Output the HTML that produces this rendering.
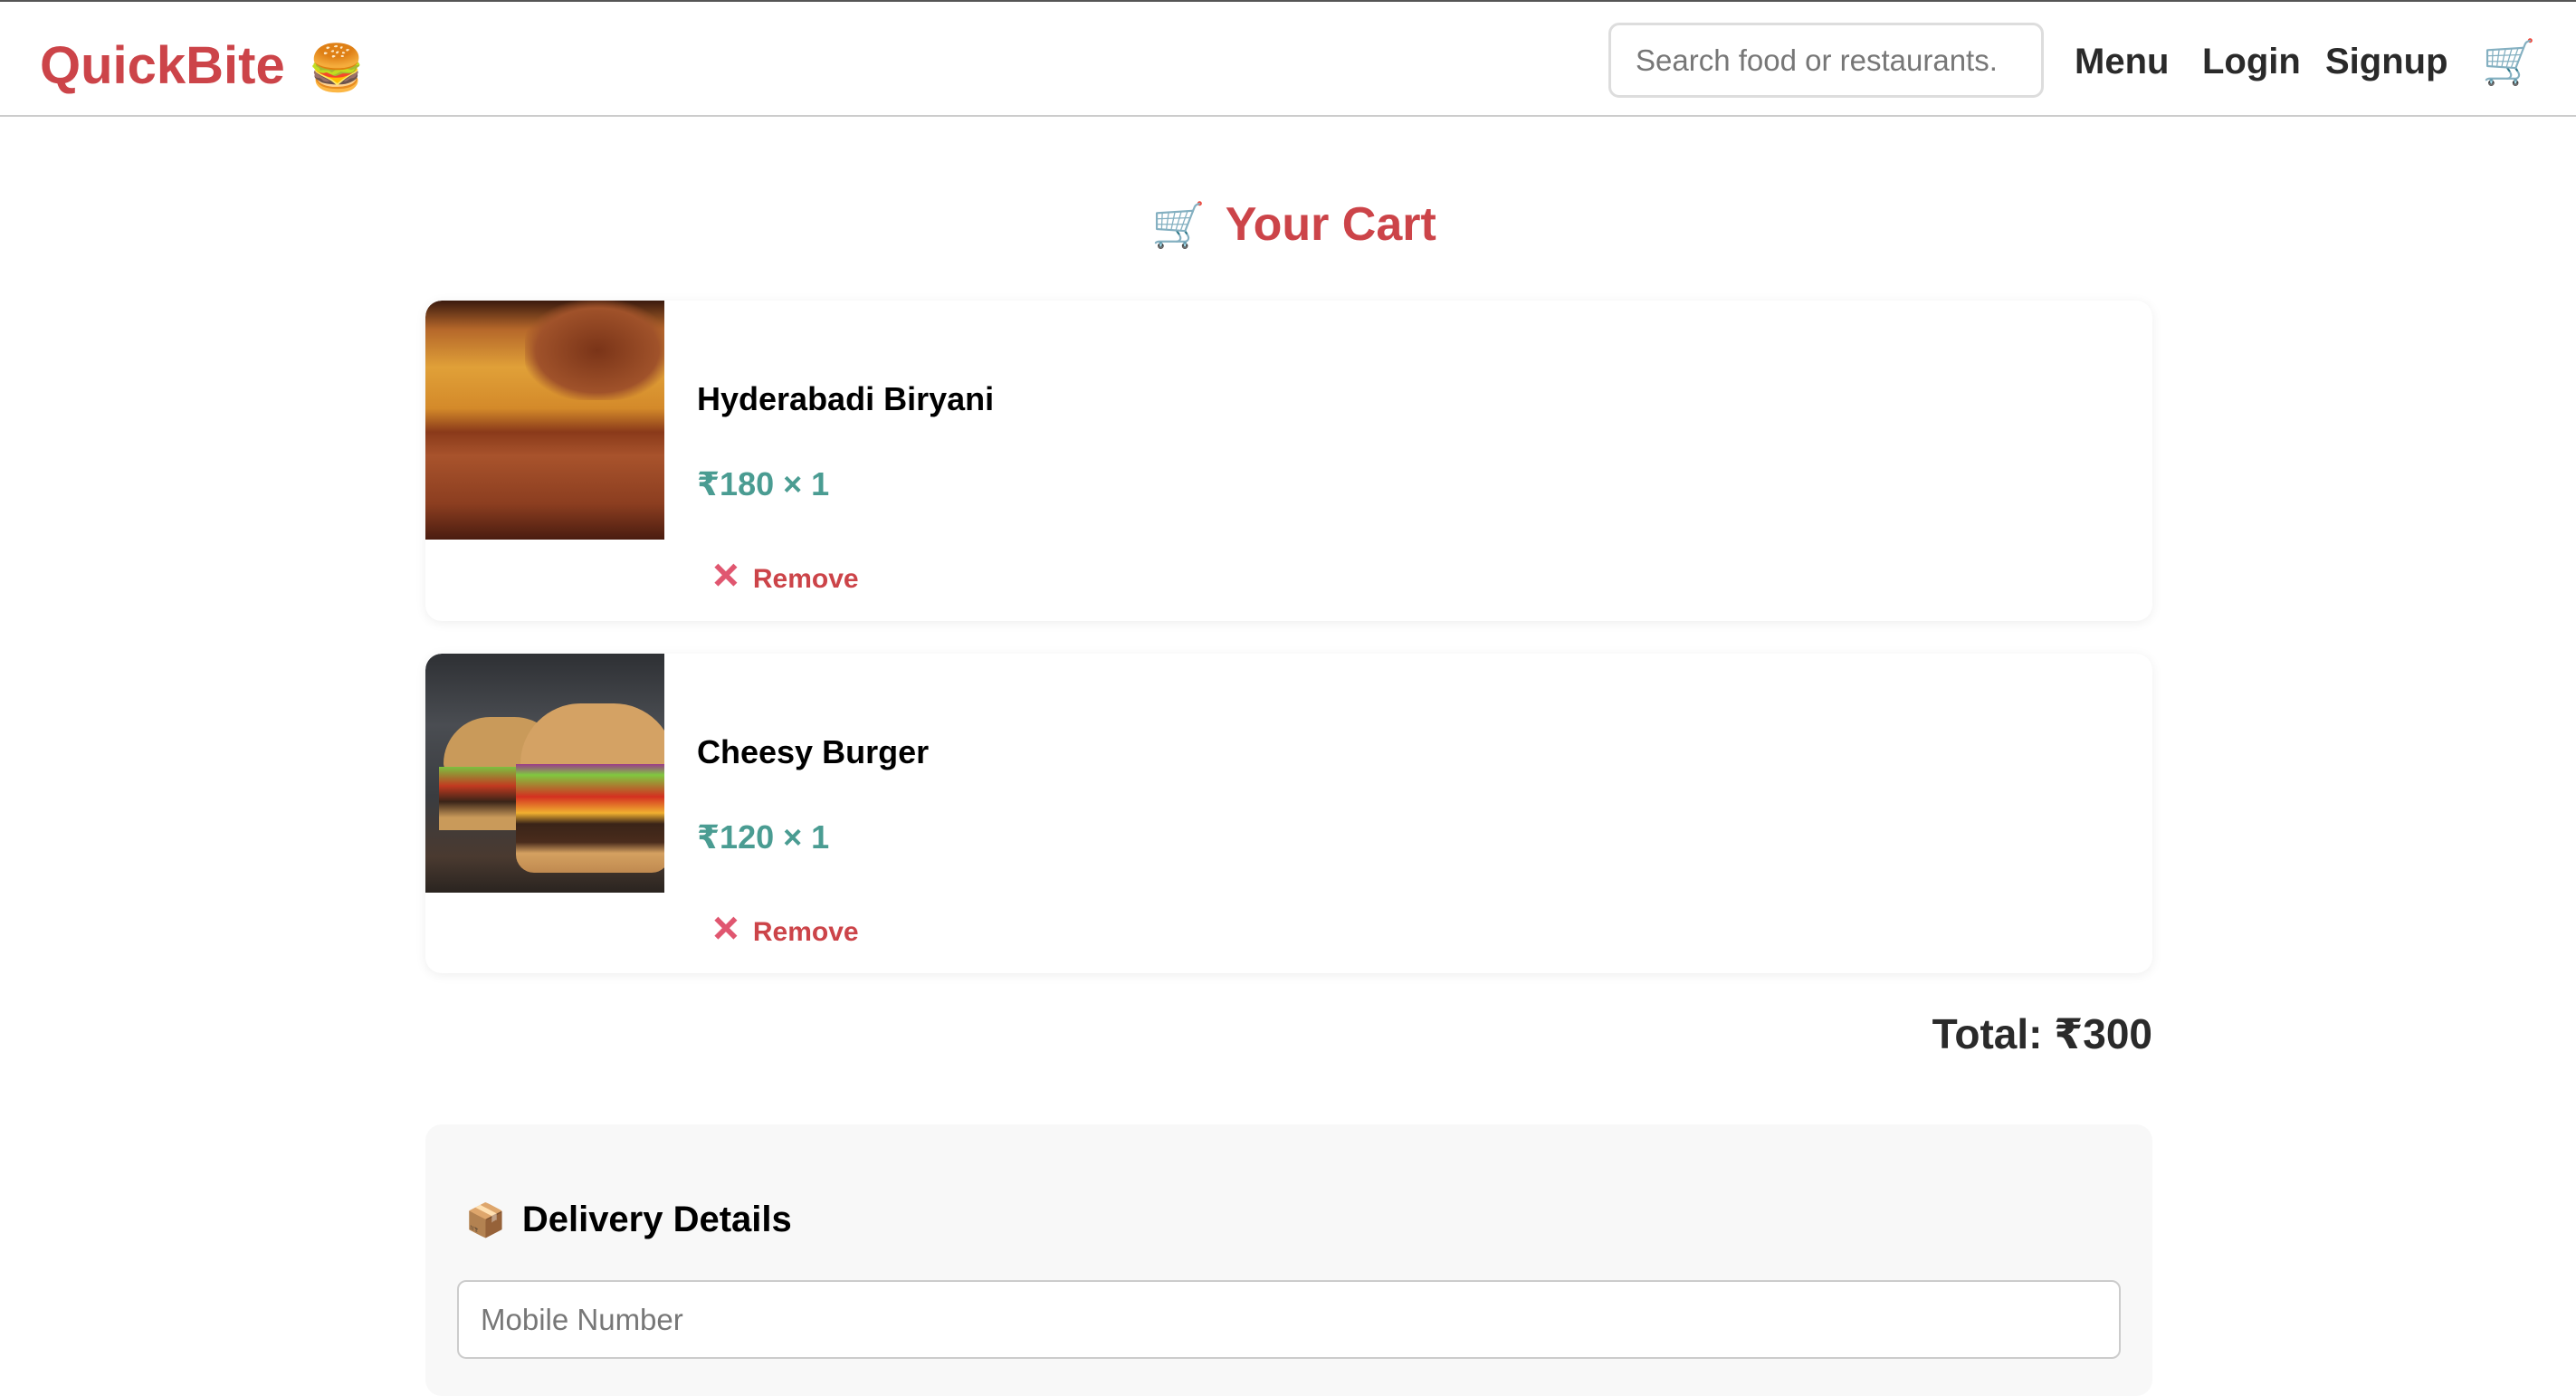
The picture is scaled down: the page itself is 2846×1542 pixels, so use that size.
<!DOCTYPE html>
<html><head><meta charset="utf-8">
<style>
*{box-sizing:border-box;margin:0;padding:0}
html,body{width:2846px;height:1514px;overflow:hidden;background:#fff;font-family:"Liberation Sans","DejaVu Sans",sans-serif}
.topbar{position:absolute;left:0;top:0;width:2846px;height:2px;background:#555}
.hdr{position:absolute;left:0;top:2px;width:2846px;height:127px;border-bottom:2px solid #ccc;background:#fff}
.logo{position:absolute;left:44px;top:36px;font-size:58px;font-weight:bold;color:#cc4449;letter-spacing:0;line-height:70px}
.logo span{font-size:50px;margin-left:26px}
.search{position:absolute;left:1777px;top:23px;width:481px;height:83px;border:3px solid #ddd;border-radius:12px;font-size:33px;color:#777;padding-left:27px;line-height:77px;white-space:nowrap;overflow:hidden}
.nav{position:absolute;top:38px;font-size:40px;font-weight:bold;color:#2a2a2a;line-height:56px}
.cart{position:absolute;left:2742px;top:40px;font-size:48px;line-height:56px;color:#999}
.title{position:absolute;left:1272px;top:215px;font-size:52px;font-weight:bold;color:#cc4449;line-height:66px;white-space:nowrap}
.title span{font-size:48px;margin-right:22px}
.card{position:absolute;left:470px;width:1908px;border-radius:18px;background:#fff;box-shadow:0 2px 12px rgba(0,0,0,0.07);overflow:hidden}
.img{position:absolute;left:0;top:0;width:264px;height:264px;border-radius:18px 0 0 0;overflow:hidden}
.name{position:absolute;left:300px;font-size:36px;font-weight:bold;color:#000}
.price{position:absolute;left:300px;font-size:36px;font-weight:bold;color:#4a9c92}
.rm{position:absolute;left:316px;font-size:30px;font-weight:bold;color:#cc4449}
.rm b{color:#e05770;font-size:38px;margin-right:14px;-webkit-text-stroke:2px #e05770}
.total{position:absolute;right:468px;top:1115px;font-size:46px;font-weight:bold;color:#2a2a2a}
.del{position:absolute;left:470px;top:1242px;width:1908px;height:300px;background:#f8f8f8;border-radius:18px}
.dh{position:absolute;left:44px;top:80px;font-size:40px;font-weight:bold;color:#000;line-height:50px}
.dh span{font-size:36px;margin-right:18px}
.inp{position:absolute;left:35px;top:172px;width:1838px;height:87px;border:2px solid #ccc;border-radius:10px;background:#fff;font-size:33px;color:#777;padding-left:24px;line-height:83px}
</style></head><body>
<div class="topbar"></div>
<div class="hdr">
<div class="logo">QuickBite<span>🍔</span></div>
<div class="search">Search food or restaurants.</div>
<div class="nav" style="left:2292px">Menu</div>
<div class="nav" style="left:2433px">Login</div>
<div class="nav" style="left:2569px">Signup</div>
<div class="cart">🛒</div>
</div>
<div class="title"><span>🛒</span>Your Cart</div>

<div class="card" style="top:332px;height:354px">
 <div class="img" style="background:linear-gradient(180deg,#3a1a0e 0%,#b5672a 12%,#e0a038 28%,#d48a2a 45%,#8a3a1a 55%,#a8532c 65%,#8c3e20 85%,#4a1c10 100%)">
  <div style="position:absolute;left:110px;top:0;width:160px;height:110px;border-radius:40%;background:radial-gradient(#7a3418,#a0522a 60%,transparent 75%)"></div>
 </div>
 <div class="name" style="top:88px">Hyderabadi Biryani</div>
 <div class="price" style="top:182px">₹180 × 1</div>
 <div class="rm" style="top:282px"><b>✕</b>Remove</div>
</div>

<div class="card" style="top:722px;height:353px">
 <div class="img" style="background:linear-gradient(180deg,#2e3034 0%,#4a4d52 30%,#3a3c40 60%,#4a3a30 85%,#2a2420 100%)">
  <div style="position:absolute;left:20px;top:70px;width:130px;height:60px;border-radius:60px 60px 10px 10px;background:#c99a5a"></div>
  <div style="position:absolute;left:15px;top:125px;width:140px;height:70px;background:linear-gradient(180deg,#7cc040,#c23a20 30%,#3a2418 55%,#c99a5a 80%)"></div>
  <div style="position:absolute;left:105px;top:55px;width:170px;height:75px;border-radius:80px 80px 10px 10px;background:#d4a264"></div>
  <div style="position:absolute;left:100px;top:122px;width:170px;height:120px;background:linear-gradient(180deg,#9a3a8a 0%,#80c840 10%,#d43020 30%,#f0b030 45%,#3a2418 55%,#4a2c1c 72%,#d4a060 82%,#c08a50 100%);border-radius:0 0 20px 20px"></div>
 </div>
 <div class="name" style="top:88px">Cheesy Burger</div>
 <div class="price" style="top:182px">₹120 × 1</div>
 <div class="rm" style="top:282px"><b>✕</b>Remove</div>
</div>

<div class="total">Total: ₹300</div>

<div class="del">
 <div class="dh"><span>📦</span>Delivery Details</div>
 <div class="inp">Mobile Number</div>
</div>
</body></html>
